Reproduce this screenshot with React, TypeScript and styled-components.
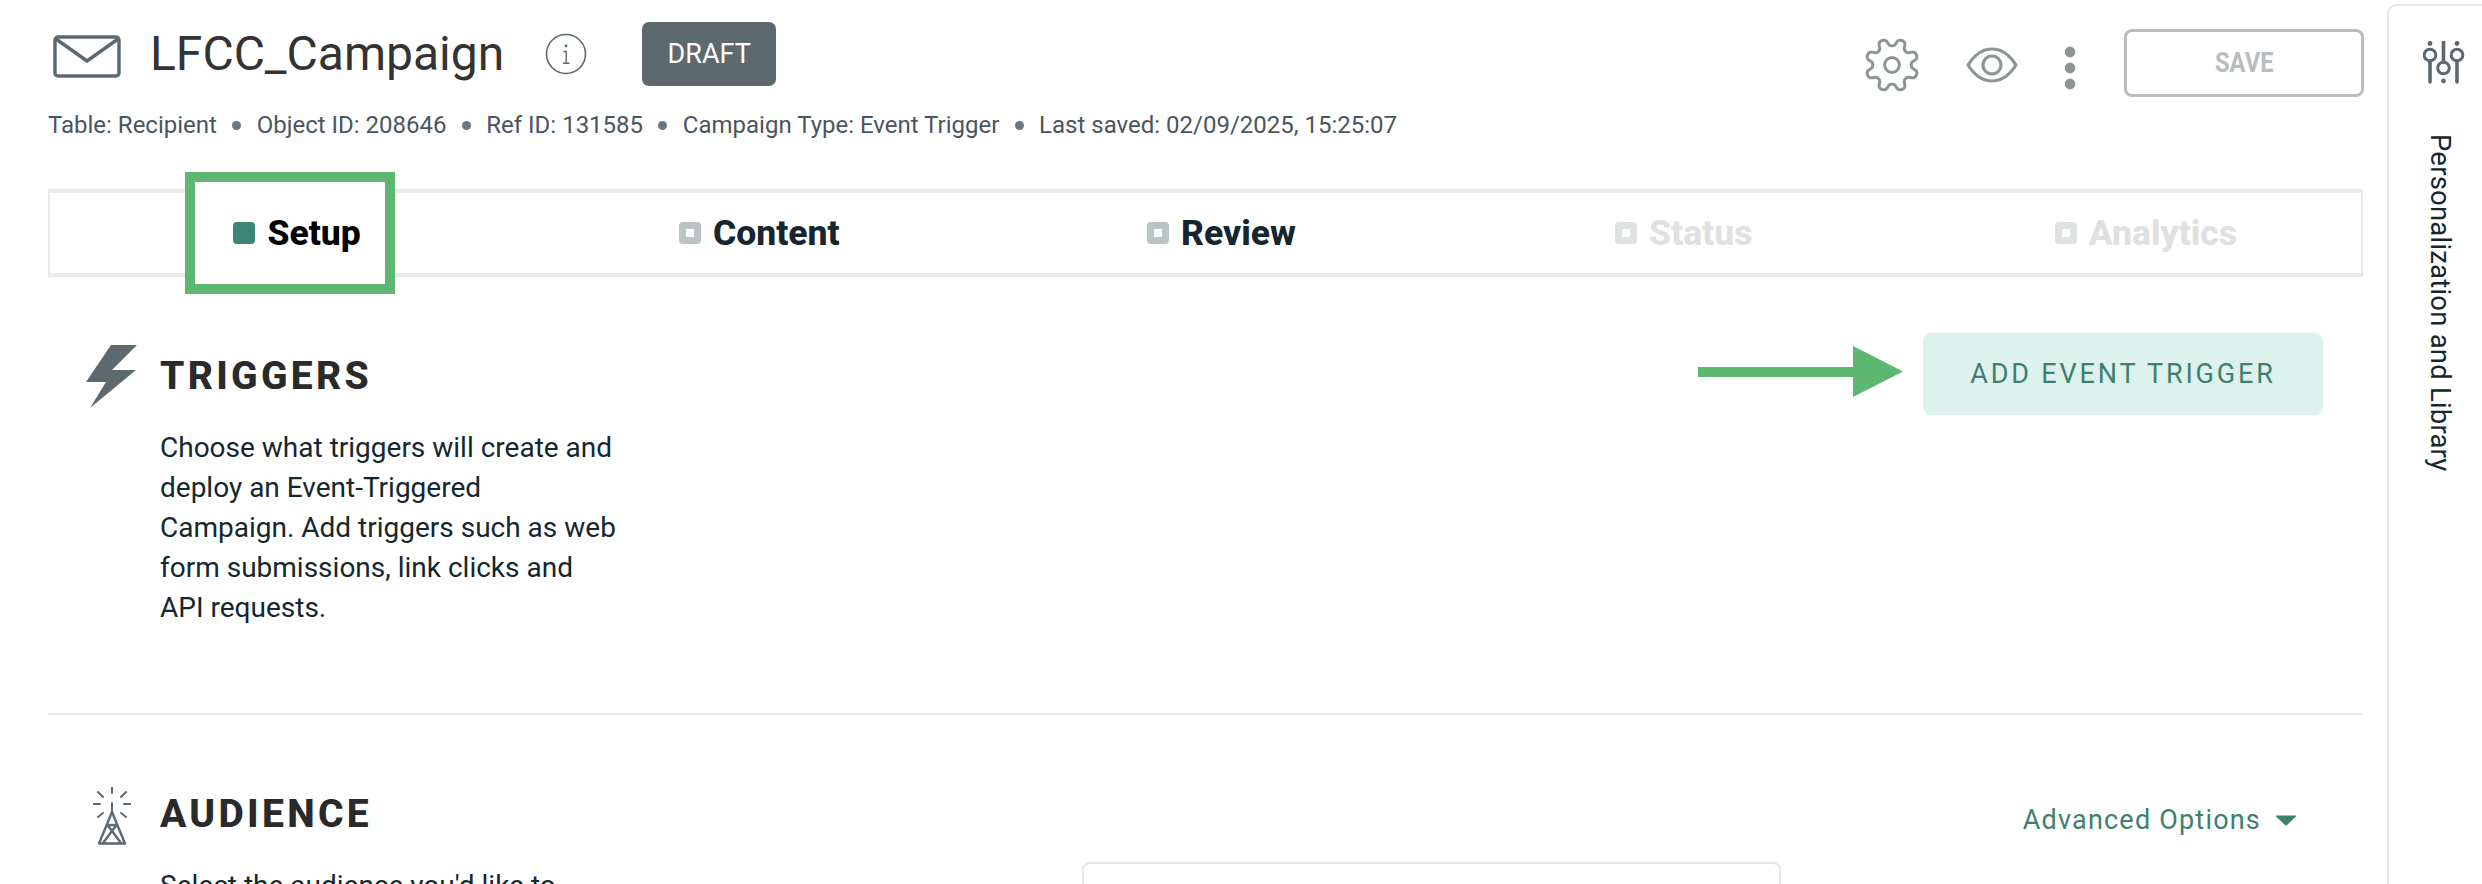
import React from "react";
import styled, { createGlobalStyle } from "styled-components";

const GlobalStyle = createGlobalStyle`
  html, body { margin: 0; padding: 0; background: #fff; }
  body { font-family: Roboto, "Liberation Sans", sans-serif; overflow: hidden; }
  * { box-sizing: border-box; }
`;

const Page = styled.div`
  position: relative;
  display: flex;
  width: 2482px;
  height: 884px;
  overflow: hidden;
  background: #fff;
`;

const Main = styled.main`
  flex: none;
  width: 2315px;
  margin-left: 48px;
  margin-right: 24px;
`;

const Header = styled.header`
  height: 189px;
  display: flex;
  flex-direction: column;
`;

const TopRow = styled.div`
  display: flex;
  align-items: flex-start;
  height: 106px;
`;

const Envelope = styled.svg`
  flex: none;
  width: 68px;
  height: 43px;
  margin: 35px 0 0 5px;
`;

const Title = styled.h1`
  margin: 25px 0 0 29px;
  font-size: 48px;
  line-height: 58px;
  font-weight: 400;
  color: #333;
  white-space: nowrap;
`;

const InfoIcon = styled.svg`
  flex: none;
  width: 42px;
  height: 42px;
  margin: 33px 0 0 41px;
`;

const DraftBadge = styled.div`
  flex: none;
  width: 134px;
  height: 64px;
  margin: 22px 0 0 55px;
  display: flex;
  align-items: center;
  justify-content: center;
  background: #5c6a70;
  border-radius: 7px;
  color: #fff;
  font-size: 27px;
`;

const Actions = styled.div`
  margin-left: auto;
  margin-right: -1px;
  display: flex;
  align-items: flex-start;
`;

const GearIcon = styled.svg`
  flex: none;
  width: 58px;
  height: 58px;
  margin-top: 36px;
`;

const EyeIcon = styled.svg`
  flex: none;
  width: 52px;
  height: 36px;
  margin: 47px 0 0 45px;
`;

const KebabIcon = styled.svg`
  flex: none;
  width: 12px;
  height: 44px;
  margin: 46px 0 0 46px;
`;

const SaveButton = styled.button`
  width: 240px;
  height: 68px;
  margin: 29px 0 0 48px;
  border: 3px solid #b8bdbd;
  border-radius: 8px;
  background: #fff;
  color: #b8bdbd;
  font-family: Roboto, sans-serif;
  font-size: 27px;
  font-weight: 700;
  letter-spacing: 0;
  padding: 0;
  display: flex;
  align-items: center;
  justify-content: center;
`;

const SaveLabel = styled.span`
  display: inline-block;
  transform: scaleX(0.88);
`;

const MetaRow = styled.div`
  display: flex;
  align-items: center;
  height: 36px;
  margin-top: 1px;
  font-size: 24px;
  color: #4a5560;
  white-space: nowrap;
`;

const MetaDot = styled.span`
  flex: none;
  width: 9px;
  height: 9px;
  margin: 0 15.4px;
  border-radius: 50%;
  background: #67778a;
`;

const Stepper = styled.nav`
  display: grid;
  grid-template-columns: repeat(5, 1fr);
  height: 88px;
  border: 2px solid #e9eaea;
  border-top-width: 4px;
  border-bottom-width: 4px;
`;

const Step = styled.div`
  position: relative;
  z-index: 2;
  display: flex;
  align-items: center;
  justify-content: center;
  gap: 12px;
  padding-left: 32px;
`;

const StepMark = styled.span<{ $state: "active" | "idle" | "disabled" }>`
  flex: none;
  width: 22px;
  height: 22px;
  border-radius: 4px;
  display: flex;
  align-items: center;
  justify-content: center;
  background: ${(p) => (p.$state === "active" ? "#3d8577" : p.$state === "idle" ? "#bcc3c5" : "#dfe2e3")};
  &::after {
    content: "";
    width: 8px;
    height: 8px;
    background: ${(p) => (p.$state === "active" ? "transparent" : "#fff")};
  }
`;

const StepLabel = styled.span<{ $state: "active" | "idle" | "disabled" }>`
  font-size: 35.5px;
  font-weight: 800;
  letter-spacing: 0;
  color: ${(p) => (p.$state === "active" ? "#000" : p.$state === "idle" ? "#14272e" : "#dfe1e1")};
`;

const Highlight = styled.div`
  position: absolute;
  z-index: 1;
  left: 185px;
  top: 172px;
  width: 210px;
  height: 122px;
  border: 10px solid #5cb870;
  background: #fff;
  pointer-events: none;
`;

const Section = styled.section<{ $height: number }>`
  display: flex;
  height: ${(p) => p.$height}px;
  position: relative;
  padding-left: 112px;
`;

const SectionBody = styled.div`
  flex: none;
  width: 480px;
`;

const SectionTitle = styled.h2<{ $top: number }>`
  margin: ${(p) => p.$top}px 0 0 0;
  font-size: 39px;
  line-height: 46px;
  font-weight: 800;
  letter-spacing: 3.3px;
  color: #2a2a2a;
`;

const SectionText = styled.p`
  margin: 29px 0 0 0;
  font-size: 28px;
  line-height: 40px;
  color: #14272e;
  white-space: nowrap;
`;

const BoltIcon = styled.svg`
  position: absolute;
  left: 38px;
  top: 68px;
  width: 52px;
  height: 64px;
`;

const TowerIcon = styled.svg`
  position: absolute;
  left: 45px;
  top: 72px;
  width: 38px;
  height: 60px;
`;

const TriggerAction = styled.div`
  margin-left: auto;
  margin-right: 40px;
  margin-top: 56px;
  display: flex;
  align-items: flex-start;
`;

const Arrow = styled.svg`
  flex: none;
  width: 206px;
  height: 52px;
  margin: 13px 19px 0 0;
`;

const AddButton = styled.button`
  width: 400px;
  height: 82px;
  border: 0;
  border-radius: 8px;
  background: #ddf1ed;
  color: #3d8070;
  font-family: Roboto, sans-serif;
  font-size: 27px;
  font-weight: 400;
  letter-spacing: 2.85px;
  padding: 0;
`;

const Divider = styled.hr`
  margin: 0;
  border: 0;
  height: 2px;
  background: #e9eaea;
`;

const AudienceCard = styled.div`
  position: absolute;
  left: 1034px;
  top: 147px;
  width: 699px;
  height: 200px;
  border: 2px solid #e6e6e6;
  border-radius: 8px;
`;

const AdvancedLink = styled.div`
  position: absolute;
  right: 66px;
  top: 87px;
  display: flex;
  align-items: center;
  gap: 14px;
  font-size: 27px;
  line-height: 36px;
  letter-spacing: 1.2px;
  color: #3d8070;
  white-space: nowrap;
`;

const Caret = styled.svg`
  flex: none;
  width: 22px;
  height: 11px;
`;

const SidePanel = styled.aside`
  flex: none;
  width: 95px;
  height: 884px;
  margin-top: 4px;
  border: 2px solid #e8e8e8;
  border-right: 0;
  border-bottom: 0;
  border-top-left-radius: 10px;
  display: flex;
  flex-direction: column;
  align-items: flex-start;
`;

const SlidersIcon = styled.svg`
  flex: none;
  width: 42px;
  height: 44px;
  margin: 35px 0 0 34px;
`;

const SideLabel = styled.div`
  margin: 49px 0 0 36px;
  writing-mode: vertical-rl;
  font-size: 27.5px;
  line-height: 30px;
  letter-spacing: 0.2px;
  color: #14272e;
  white-space: nowrap;
`;

const steps: { label: string; state: "active" | "idle" | "disabled" }[] = [
  { label: "Setup", state: "active" },
  { label: "Content", state: "idle" },
  { label: "Review", state: "idle" },
  { label: "Status", state: "disabled" },
  { label: "Analytics", state: "disabled" },
];

const meta = [
  "Table: Recipient",
  "Object ID: 208646",
  "Ref ID: 131585",
  "Campaign Type: Event Trigger",
  "Last saved: 02/09/2025, 15:25:07",
];

const gearPath = () => {
  const cx = 29;
  const cy = 29;
  const pts: string[] = [];
  const n = 320;
  for (let i = 0; i < n; i++) {
    const t = (i / n) * Math.PI * 2;
    const s = Math.tanh(1.7 * -Math.cos(8 * (t + Math.PI / 2)));
    const r = 22.8 + 3.8 * s;
    pts.push(`${(cx + r * Math.cos(t)).toFixed(2)} ${(cy + r * Math.sin(t)).toFixed(2)}`);
  }
  return `M${pts.join("L")}Z`;
};

export default function App() {
  return (
    <Page>
      <GlobalStyle />
      <Main>
        <Header>
          <TopRow>
            <Envelope viewBox="0 0 68 43" fill="none" stroke="#5c6a70" strokeWidth="3.4">
              <rect x="2" y="2" width="64" height="39" rx="3" />
              <path d="M3 4 L34 26 L65 4" strokeLinejoin="round" />
            </Envelope>
            <Title>LFCC_Campaign</Title>
            <InfoIcon viewBox="0 0 42 42" fill="none" stroke="#5c6a70">
              <circle cx="21" cy="21" r="19.5" strokeWidth="1.6" />
              <circle cx="21" cy="13" r="1.4" fill="#5c6a70" stroke="none" />
              <path d="M18.5 18.5 H21.2 V30 M18 30.2 H24.5" strokeWidth="1.4" />
            </InfoIcon>
            <DraftBadge>DRAFT</DraftBadge>
            <Actions>
              <GearIcon viewBox="0 0 58 58" fill="none" stroke="#8c9691" strokeWidth="3">
                <path d={gearPath()} strokeLinejoin="round" />
                <circle cx="29" cy="29" r="7.4" />
              </GearIcon>
              <EyeIcon viewBox="0 0 52 36" fill="none" stroke="#8c9691" strokeWidth="3.2">
                <path d="M2 18 C9 7 17 2 26 2 C35 2 43 7 50 18 C43 29 35 34 26 34 C17 34 9 29 2 18 Z" strokeLinejoin="round" />
                <circle cx="26" cy="18" r="9" />
              </EyeIcon>
              <KebabIcon viewBox="0 0 12 44" fill="#8c9691">
                <circle cx="6" cy="6" r="5.4" />
                <circle cx="6" cy="22" r="5.4" />
                <circle cx="6" cy="38" r="5.4" />
              </KebabIcon>
              <SaveButton type="button">
                <SaveLabel>SAVE</SaveLabel>
              </SaveButton>
            </Actions>
          </TopRow>
          <MetaRow>
            {meta.map((m, i) => (
              <React.Fragment key={m}>
                {i > 0 && <MetaDot />}
                <span>{m}</span>
              </React.Fragment>
            ))}
          </MetaRow>
        </Header>
        <Stepper>
          {steps.map((s) => (
            <Step key={s.label}>
              <StepMark $state={s.state} />
              <StepLabel $state={s.state}>{s.label}</StepLabel>
            </Step>
          ))}
        </Stepper>
        <Section $height={436}>
          <BoltIcon viewBox="0 0 52 64" fill="#5c6a70">
            <polygon points="25,0 51,0 26,25 50,25 4,63 20,37 0,37" />
          </BoltIcon>
          <SectionBody>
            <SectionTitle $top={76}>TRIGGERS</SectionTitle>
            <SectionText>
              Choose what triggers will create and
              <br />
              deploy an Event-Triggered
              <br />
              Campaign. Add triggers such as web
              <br />
              form submissions, link clicks and
              <br />
              API requests.
            </SectionText>
          </SectionBody>
          <TriggerAction>
            <Arrow viewBox="0 0 206 52">
              <polygon points="0,21 155,21 155,0 205,25.5 155,51 155,31 0,31" fill="#5cb870" />
            </Arrow>
            <AddButton type="button">ADD EVENT TRIGGER</AddButton>
          </TriggerAction>
        </Section>
        <Divider />
        <Section $height={168}>
          <TowerIcon viewBox="0 0 38 60" fill="none" stroke="#5c6a70" strokeWidth="2.4">
            <path d="M19 0.5 V6 M5 5 L10 10 M33 5 L28 10 M0.5 17 H7 M31 17 H37.5 M5 30 L10 26 M33 30 L28 26" strokeLinecap="round" strokeWidth="2" />
            <path d="M19 16 V26" strokeLinecap="round" strokeWidth="2" />
            <path d="M19 25 L6 56.5 H32 Z M14.5 38 H23.5 M14.5 38 L28 56 M23.5 38 L10 56" strokeLinejoin="round" />
          </TowerIcon>
          <SectionBody>
            <SectionTitle $top={76}>AUDIENCE</SectionTitle>
            <SectionText>Select the audience you'd like to</SectionText>
          </SectionBody>
          <AdvancedLink>
            Advanced Options
            <Caret viewBox="0 0 22 11">
              <path d="M1.5 0.5 H20.5 Q21.8 0.5 21 1.6 L12 10 Q11 11 10 10 L1 1.6 Q0.2 0.5 1.5 0.5 Z" fill="#3d8070" />
            </Caret>
          </AdvancedLink>
          <AudienceCard />
        </Section>
      </Main>
      <SidePanel>
        <SlidersIcon viewBox="0 0 42 44" fill="none" stroke="#5c6a70" strokeWidth="3">
          <circle cx="7" cy="2.5" r="2.4" fill="#5c6a70" stroke="none" />
          <circle cx="34" cy="2.5" r="2.4" fill="#5c6a70" stroke="none" />
          <circle cx="20.5" cy="40" r="2.4" fill="#5c6a70" stroke="none" />
          <circle cx="7" cy="14" r="5.8" />
          <circle cx="34" cy="14" r="5.8" />
          <circle cx="20.5" cy="27" r="5.8" />
          <path d="M7 20 V41 M34 20 V41 M20.5 1 V21" strokeWidth="3.6" strokeLinecap="round" />
        </SlidersIcon>
        <SideLabel>Personalization and Library</SideLabel>
      </SidePanel>
      <Highlight />
    </Page>
  );
}
